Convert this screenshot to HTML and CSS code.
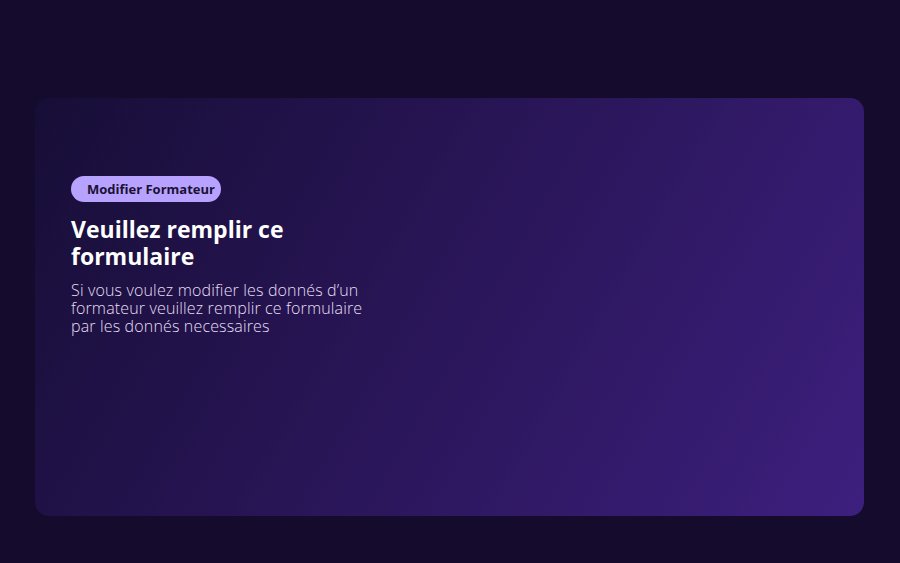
FILE: index.html
```html
<!DOCTYPE html>
<html lang="fr">
<head>
<meta charset="utf-8">
<title>Modifier Formateur</title>
<link rel="stylesheet" href="styles.css">
</head>
<body>
  <main class="page">
    <section class="card">
      <div class="intro">
        <span class="badge">Modifier Formateur</span>
        <h1 class="title">Veuillez remplir ce formulaire</h1>
        <p class="lead">Si vous voulez modifier les donnés d’un formateur veuillez remplir ce formulaire par les donnés necessaires</p>
      </div>
    </section>
  </main>
</body>
</html>
```
FILE: styles.css
```css
* { box-sizing: border-box; }
html, body { margin: 0; height: 100%; }
body {
  background: #140b2d;
  font-family: "Open Sans", "Noto Sans", sans-serif;
}
.page {
  padding: 98px 36px 47px 35px;
  height: 100%;
}
.card {
  height: 418px;
  border-radius: 14px;
  background: linear-gradient(120deg, #170e37 0%, #261452 40%, #3d1f7e 100%);
  padding: 78px 36px;
}
.intro {
  width: 300px;
  display: flex;
  flex-direction: column;
  align-items: flex-start;
}
.badge {
  display: inline-block;
  height: 26px;
  line-height: 26px;
  padding: 0 6px 0 16px;
  border-radius: 13px;
  background: #b7a3ff;
  color: #1a1133;
  font-size: 13px;
  font-weight: 700;
  white-space: nowrap;
}
.title {
  margin: 14px 0 0;
  color: #ffffff;
  font-size: 23px;
  font-weight: 700;
  line-height: 27px;
}
.lead {
  margin: 11px 0 0;
  color: #e6dff5;
  font-size: 16px;
  font-weight: 300;
  letter-spacing: 0.15px;
  line-height: 18px;
}
```
